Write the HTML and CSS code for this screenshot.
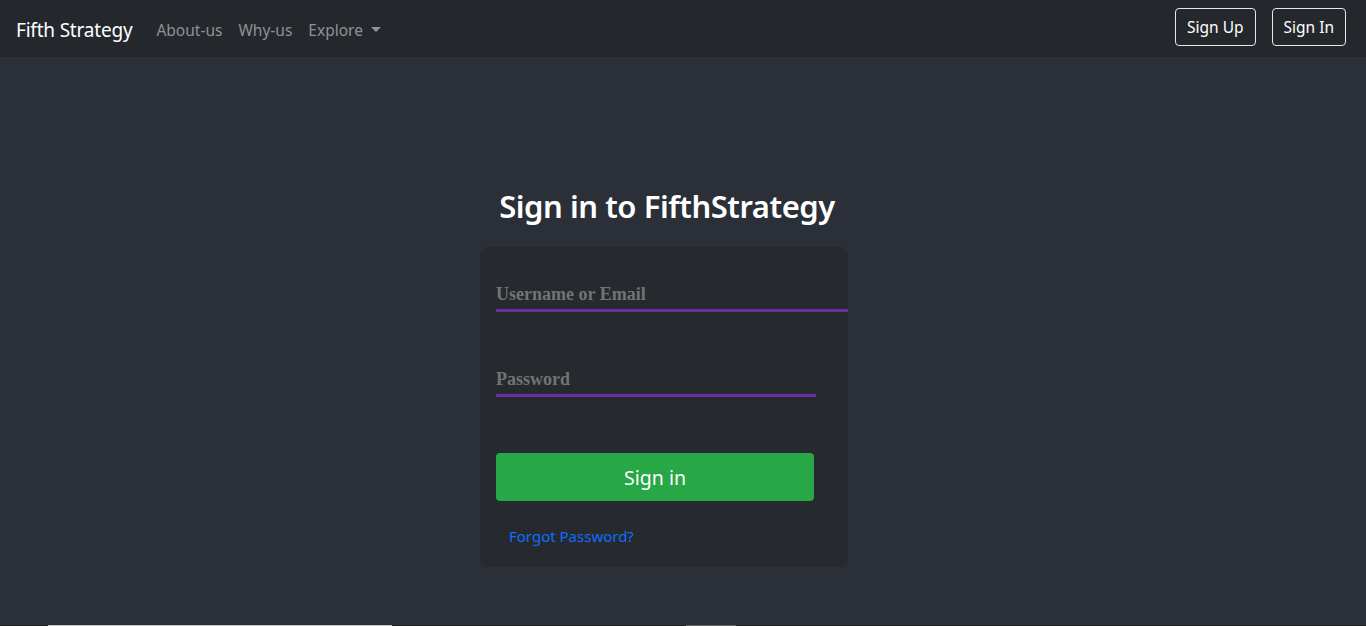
FILE: index.html
```html
<!DOCTYPE html>
<html lang="en">
<head>
<meta charset="utf-8">
<title>Sign in - Fifth Strategy</title>
<link rel="stylesheet" href="styles.css">
</head>
<body>
<nav class="navbar">
  <a class="brand" href="#">Fifth Strategy</a>
  <ul class="nav-links">
    <li><a href="#">About-us</a></li>
    <li><a href="#">Why-us</a></li>
    <li><a href="#" class="dropdown">Explore <span class="caret"></span></a></li>
  </ul>
  <div class="nav-actions">
    <a href="#" class="btn-outline">Sign Up</a>
    <a href="#" class="btn-outline">Sign In</a>
  </div>
</nav>
<main class="main">
  <h2 class="title">Sign in to FifthStrategy</h2>
  <form class="card">
    <input class="field field-wide" type="text" placeholder="Username or Email">
    <input class="field field-pass" type="password" placeholder="Password">
    <button class="btn-submit" type="button">Sign in</button>
    <a href="#" class="forgot">Forgot Password?</a>
  </form>
</main>
<div class="next-strip">
  <span class="strip-a"></span>
  <span class="strip-b"></span>
</div>
</body>
</html>
```
FILE: styles.css
```css
* { box-sizing: border-box; }
html, body { margin: 0; padding: 0; }
body {
  background: #2b3038;
  font-family: "Noto Sans", "Open Sans", sans-serif;
  color: #fff;
  overflow: hidden;
}
a { text-decoration: none; }

.navbar {
  height: 57px;
  background: #24282d;
  display: flex;
  align-items: center;
  padding: 2px 20px 0 16px;
}
.brand {
  color: #fff;
  font-size: 19px;
  margin-right: 16px;
  letter-spacing: -0.2px;
}
.nav-links {
  list-style: none;
  display: flex;
  margin: 0;
  padding: 0;
  flex: 1;
}
.nav-links a {
  color: #8e9195;
  font-size: 15.5px;
  padding: 0 8px;
  display: flex;
  align-items: center;
}
.caret {
  display: inline-block;
  margin-left: 8px;
  border-top: 5px solid #8e9195;
  border-left: 5px solid transparent;
  border-right: 5px solid transparent;
}
.nav-actions {
  display: flex;
  gap: 16px;
  align-self: flex-start;
  margin-top: 6px;
}
.btn-outline {
  color: #fff;
  border: 1px solid #e8e8e8;
  border-radius: 4px;
  height: 38px;
  padding: 0 11px;
  display: flex;
  align-items: center;
  font-size: 15.5px;
}

.main {
  height: 568px;
  display: flex;
  flex-direction: column;
  align-items: center;
  padding: 130px 38px 0 0;
}
.title {
  margin: 0 0 22px;
  font-size: 31px;
  font-weight: 600;
  line-height: 38px;
  letter-spacing: -0.45px;
  padding-left: 6px;
}
.card {
  width: 368px;
  height: 320px;
  background: #262a2f;
  border-radius: 8px;
  padding: 32px 16px 0;
  display: flex;
  flex-direction: column;
}
.field {
  background: transparent;
  border: none;
  border-bottom: 3px solid #6b2fa0;
  height: 33px;
  padding: 0;
  font-family: "Liberation Serif", serif;
  font-weight: bold;
  font-size: 18px;
  color: #ddd;
  outline: none;
}
.field::placeholder { color: #737373; }
.field-wide { width: 352px; }
.field-pass { width: 320px; margin-top: 52px; }
.btn-submit {
  margin-top: 56px;
  width: 318px;
  height: 48px;
  background: #27a745;
  border: none;
  border-radius: 4px;
  color: #fff;
  font-family: "Noto Sans", "Open Sans", sans-serif;
  font-size: 19.5px;
}
.forgot {
  color: #0d6efd;
  font-size: 15px;
  margin: 25px 0 0 13px;
}

.next-strip {
  height: 1px;
  background: #1f1f1f;
  display: flex;
}
.strip-a { margin-left: 48px; width: 344px; background: #c4c4c4; }
.strip-b { margin-left: 294px; width: 50px; background: #666; }
```
